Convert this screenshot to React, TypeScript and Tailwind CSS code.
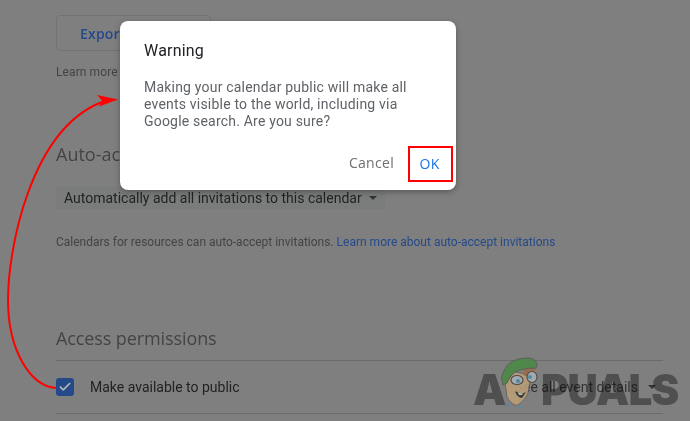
import { Check } from "lucide-react";

function CurvedArrow() {
  return (
    <svg className="absolute left-0 top-0" width="140" height="421" viewBox="0 0 140 421" fill="none">
      <path d="M56 388C30 386 8 350 8 300C8 250 30 130 102 102" stroke="#ff0000" strokeWidth="2" />
      <path d="M118 99.5L97 95L102 100.5L99 106.5Z" fill="#ff0000" />
    </svg>
  );
}

function Mascot() {
  return (
    <svg className="absolute left-[495px] top-[355px] opacity-90" width="50" height="60" viewBox="0 0 50 60">
      <path d="M10 27L12 42C15 48 20 51 23 50C27 47 31 43 33 38L36 20L20 17Z" fill="#b99f78" stroke="#5a5a5a" strokeWidth="0.8" />
      <path d="M30 13L41 11L38 24L28 20Z" fill="#9c6a4a" />
      <path d="M6.5 23C8 16 12 10 15 8C20 4 28 3 33 3C39 3 42 6 42 11L41 13C34 13 26 14 20 17C16 20 14 24 12 28L8 30Z" fill="#4a8a45" stroke="#5a5a5a" strokeWidth="1" />
      <ellipse cx="22" cy="25" rx="6" ry="4.5" fill="#a9b0b4" stroke="#4a4a4a" strokeWidth="1.2" />
      <ellipse cx="37" cy="22" rx="5" ry="5.5" fill="#a9b0b4" stroke="#4a4a4a" strokeWidth="1.2" />
      <circle cx="23" cy="26" r="2" fill="#4a8ea8" />
      <circle cx="35" cy="22" r="2" fill="#4a8ea8" />
      <path d="M20 36C24 39 28 39 31 37L27 43C24 43 21 40 20 36Z" fill="#333333" />
      <path d="M23 38L28 38.5L27 40L24 40Z" fill="#c8c8c8" />
      <circle cx="13" cy="50" r="1.6" fill="#4a8ea8" />
      <circle cx="25" cy="52" r="1.6" fill="#4a8ea8" />
    </svg>
  );
}

function Watermark() {
  return (
    <div className="absolute left-0 top-0">
      <span className="absolute left-[473px] top-[368px] font-['Inter',sans-serif] text-[42px] leading-[44px] font-black text-[#9e9e9e] mix-blend-multiply">A</span>
      <span className="absolute left-[541px] top-[368px] font-['Inter',sans-serif] text-[42px] leading-[44px] font-black tracking-[-1px] text-[#9e9e9e] mix-blend-multiply">PUALS</span>
      <Mascot />
    </div>
  );
}

function Dialog() {
  return (
    <div className="absolute left-[120px] top-[21px] flex h-[169px] w-[336px] flex-col rounded-[8px] bg-white pl-[24px] pr-[3px] pt-[18px] pb-[8px] shadow-[0_2px_6px_rgba(0,0,0,0.3)]">
      <h2 className="font-['Roboto',sans-serif] text-[16px] leading-[24px] font-normal tracking-[0.2px] text-[#202124]">Warning</h2>
      <p className="mt-[16px] w-[290px] font-['Roboto',sans-serif] text-[14px] leading-[17px] tracking-[0.2px] text-[#5f6368]">
        Making your calendar public will make all events visible to the world, including via Google search. Are you sure?
      </p>
      <div className="mt-auto flex items-center justify-end">
        <span className="mr-[14px] pb-[3px] font-['Open_Sans',sans-serif] text-[14px] font-medium tracking-[0.3px] text-[#6f6f6f]">Cancel</span>
        <span className="flex h-[36px] w-[45px] items-center justify-center border-[2px] border-[#ff0000] pb-[2px] pr-[2px] font-['Open_Sans',sans-serif] text-[14px] font-medium tracking-[0.3px] text-[#1a73e8]">OK</span>
      </div>
    </div>
  );
}

export default function App() {
  return (
    <div className="relative h-[421px] w-[690px] overflow-hidden bg-[#7f7f7f] font-['Roboto',sans-serif]">
      <div className="flex flex-col pl-[56px] pr-[27px] pt-[15px]">
        <div className="flex h-[36px] w-[155px] items-center rounded-[4px] border border-[#737373] pl-[23px] font-['Open_Sans',sans-serif] text-[14px] font-semibold tracking-[0.2px] text-[#254a8a]">Export calendar</div>
        <p className="mt-[13px] text-[12px] leading-[16px] tracking-[0.1px] text-[#444444]">Learn more about exporting</p>
        <h3 className="mt-[62px] font-['Open_Sans',sans-serif] text-[18px] leading-[24px] text-[#444444]">Auto-accept invitations</h3>
        <div className="mt-[21px] flex h-[22px] w-[329px] items-center bg-[#7a7c7c] pl-[8px] text-[14px] text-[#222222]">
          Automatically add all invitations to this calendar
          <span className="ml-[7px] h-0 w-0 border-x-[4px] border-t-[4px] border-x-transparent border-t-[#333333]" />
        </div>
        <p className="mt-[25px] text-[12px] leading-[16px] text-[#444444]">
          Calendars for resources can auto-accept invitations. <span className="text-[#254a8a]">Learn more about auto-accept invitations</span>
        </p>
        <h3 className="mt-[76px] font-['Open_Sans',sans-serif] text-[18px] leading-[24px] tracking-[-0.1px] text-[#444444]">Access permissions</h3>
        <div className="mt-[10px] flex h-[54px] items-center border-y border-[#6b6b6b]">
          <span className="flex h-[18px] w-[18px] items-center justify-center rounded-[3px] bg-[#254a8a]">
            <Check className="h-[14px] w-[14px] text-[#b4b4b4]" strokeWidth={3} />
          </span>
          <span className="ml-[16px] text-[14px] text-[#222222]">Make available to public</span>
          <span className="ml-auto text-[14px] text-[#333333]">See all event details</span>
          <span className="ml-[10px] mr-[7px] h-0 w-0 border-x-[4px] border-t-[4px] border-x-transparent border-t-[#333333]" />
        </div>
      </div>
      <Watermark />
      <CurvedArrow />
      <Dialog />
    </div>
  );
}
